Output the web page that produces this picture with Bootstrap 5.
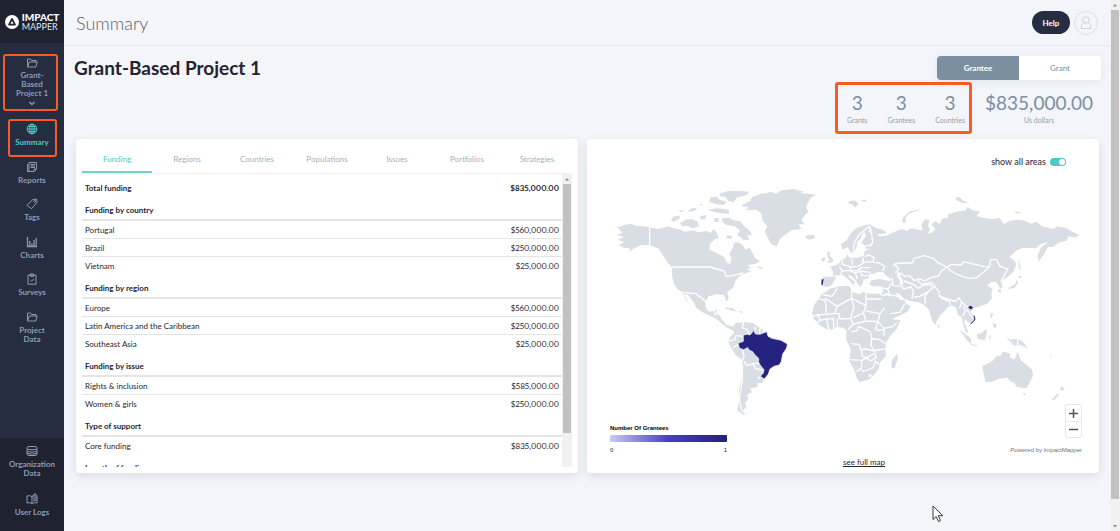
<!DOCTYPE html>
<html lang="en">
<head>
<meta charset="utf-8">
<meta name="viewport" content="width=device-width, initial-scale=1">
<title>Summary - Impact Mapper</title>
<link href="https://cdn.jsdelivr.net/npm/bootstrap@5.3.0/dist/css/bootstrap.min.css" rel="stylesheet">
<style>
:root{--navy:#272d41;--ink:#1e2231;--slate:#7b8fa1;--teal:#4cc9c6;--mark:#f95b25}
body{font-family:Lato,"Open Sans",sans-serif;font-size:8px;line-height:10px;color:#1f2430;background:#f4f5fa}
button{font-family:inherit}
a{color:inherit;text-decoration:none}
.side{width:64px;background:var(--navy);color:#8c9bb0;line-height:9px;font-weight:700;text-align:center}
.brand{height:43px;background:var(--ink);color:#fff;font-size:10px;line-height:9px;gap:3px;text-align:left}
.brand b,.brand span span{display:block}
.brand b{font-weight:900}
.brand span span{font-size:9px;font-weight:400;color:#dfe2e8}
.ico{width:12px;height:12px;fill:none;stroke:currentColor;stroke-width:1;display:block}
.chev{height:6px}
.side-item{display:flex;flex-direction:column;align-items:center;gap:3px;position:relative;width:60px}
.project{margin-top:14px;background:none;border:0;padding:0;color:inherit;font-weight:700;line-height:9px;gap:2px}
.ring{position:absolute;border:2px solid var(--mark);border-radius:3px;pointer-events:none}
.ring-project{inset:-3px 4px -5px 1px}
.ring-summary{inset:-4px 5px -10px 6px}
.side-list{margin-top:17px;height:221px}
.active-item{color:var(--teal)}
.side-foot{background:var(--ink);height:93px;padding-top:7px;gap:15px}
.topbar{height:46px;border-bottom:1px solid #e7e9ef;padding:0 12px}
.topbar h1{font-size:18px;line-height:22px;font-weight:300;color:#5f6168}
.help{background:var(--navy);color:#fff;font-size:8px;font-weight:700;line-height:10px;width:38px;height:23px;border-radius:12px;border:0}
.avatar{width:24px;height:24px;border:1px solid #d9dfe6;border-radius:50%;background:none;color:#c8d2dc;padding:0}
.page{padding:10px 9px 0 10px}
.page h2{font-size:19px;line-height:24px;font-weight:700}
.switcher{width:164px;height:24px;box-shadow:0 2px 8px #27304514;border-radius:4px;overflow:hidden}
.switcher button{border:0;background:#fff;color:var(--slate);font-size:8px;line-height:10px}
.switcher button.on{background:var(--slate);color:#fff;font-weight:700}
.stats{height:55px;color:var(--slate)}
.stat-box{position:relative;padding:0 4px 0 10px;gap:20px}
.ring-stats{inset:-10px -3px -8px -2px;border-width:3px}
.stat b{display:block;font-size:19px;line-height:22px;font-weight:400}
.stat span{font-size:7px;line-height:12px;display:block;color:#8fa0b0}
.panels{display:grid;grid-template-columns:502fr 512fr;gap:9px;margin:0 2px}
.panel{background:#fff;border-radius:4px;box-shadow:0 3px 10px #2730451f}
.fund-panel{padding:4px 6px 6px}
.tabs{display:grid;grid-template-columns:repeat(7,1fr);border-bottom:1px solid #f0f1f4}
.tabs button{background:none;border:0;border-bottom:2px solid transparent;height:30px;padding:3px 0 0;color:#a3b2c1;font-size:8px;line-height:10px}
.tabs button.on{color:var(--teal);border-color:#6fd3d0}
.list{height:293px;overflow:hidden}
.fund{width:100%;border-collapse:separate;border-spacing:0;font-variant-numeric:proportional-nums}
.fund td,.fund th{height:18px;padding:0 3px;border-bottom:1px solid #e3e4e6;font-weight:400}
.fund td:last-child{text-align:right}
.fund tr:last-child td{border-bottom:0}
.fund thead th,.fund thead td{font-weight:700;height:23px;padding-top:4px;border:0}
.fund tbody tr:first-child th{height:24px;padding-top:4px;border-bottom:2px solid #e3e4e6;font-weight:700}
.bar{width:10px;background:#f1f1f1;display:flex;flex-direction:column;align-items:center;flex:none}
.bar i{width:8px;background:#c1c1c1;flex:none}
.bar svg{width:10px;height:10px;flex:none;fill:#8a8a8a}
.map-panel{position:relative;padding:18px 9px 4px 13px}
.form-switch.areas{min-height:0;padding:0;margin:0 24px 12px 0;font-size:9px}
.areas .form-check-input{float:none;margin:0;width:16px;height:8px;border:0;background-color:var(--teal)}
.world{width:100%;display:block}
.land{fill:#d9dee5}
.hit{fill:#252380;stroke:#fff;stroke-width:2}
.edge{fill:none;stroke:#fff;stroke-width:4;stroke-linejoin:round}
.legend{font-family:"Liberation Sans",sans-serif;font-size:6px;line-height:8px;padding:0 8px 0 10px}
.scale{width:117px}
.ramp{height:7px;border-radius:1px;margin:3px 0 4px;background:linear-gradient(90deg,#c8c8fa,#4640bf 50%,#232078)}
.full-map{margin-top:3px;padding-left:38px;text-align:center}
.full-map a{text-decoration:underline}
.zoomer{position:absolute;right:17px;bottom:35px;width:17px;border:1px solid #e8e8ea;border-radius:2px;background:#fff}
.zoomer button{background:none;border:0;height:16px;width:15px;padding:0;color:#555;display:flex;align-items:center;justify-content:center}
.zoomer button+button{border-top:1px solid #e8e8ea}
.pointer{position:absolute;left:932px;top:505px;width:12px;height:18px}
</style>
</head>
<body>
<div class="d-flex min-vh-100">
<aside class="side d-flex flex-column flex-shrink-0">
  <a href="#" class="brand d-flex align-items-center justify-content-center">
    <svg width="14" height="14" viewBox="0 0 14 14"><circle cx="7" cy="7" r="7" fill="#fff"/><path d="M7 4 10 9.600H4Z" fill="none" stroke="#1e2231" stroke-width="1.700" stroke-linejoin="round"/></svg>
    <span><b>IMPACT</b><span>MAPPER</span></span>
  </a>
  <button class="side-item project align-self-center">
    <svg class="ico" viewBox="0 0 12 12"><path d="M1.500 10V2h3l1 1.500H10V5M1.500 10 3.300 5h8L9.800 10Z"/></svg>
    <span>Grant-<br>Based<br>Project 1</span>
    <svg class="ico chev" viewBox="0 0 12 6"><path d="m3.500 2 2.500 2.500L8.500 2" stroke-width="1.500"/></svg>
    <span class="ring ring-project"></span>
  </button>
  <nav class="side-list d-flex flex-column justify-content-between align-items-center">
    <a href="#" class="side-item active-item"><svg class="ico" viewBox="0 0 12 12"><circle cx="6" cy="6" r="4.800"/><ellipse cx="6" cy="6" rx="2.300" ry="4.800"/><path d="M6 1v10M1.200 6h9.600M2 3.500h8M2 8.500h8"/></svg>Summary<span class="ring ring-summary"></span></a>
    <a href="#" class="side-item"><svg class="ico" viewBox="0 0 12 12"><path d="M3 1.500h7.500v7l-2 2H3ZM1.500 3v7.500H8M4.500 3.500H9M4.500 5H9M4.500 6.500H9M8 10V8h2"/></svg>Reports</a>
    <a href="#" class="side-item"><svg class="ico" viewBox="0 0 12 12"><path d="m1 7.500 5.500-5.800L10.500 1l.5 3.500-5.500 6.200Z"/><circle cx="8.800" cy="3.300" r=".8"/></svg>Tags</a>
    <a href="#" class="side-item"><svg class="ico" viewBox="0 0 12 12"><path d="M1.500 1v9.500H11M3.800 10V5M6 10V7.500M8 10V4M10.200 10V2" stroke-width="1.300"/></svg>Charts</a>
    <a href="#" class="side-item"><svg class="ico" viewBox="0 0 12 12"><path d="M2 2.200h8v9H2ZM4.300 1h3.400v2.300H4.300ZM4.200 7l1.400 1.300L8 5.700"/></svg>Surveys</a>
    <a href="#" class="side-item"><svg class="ico" viewBox="0 0 12 12"><path d="M1.500 10V2h3l1 1.500H10V5M1.500 10 3.300 5h8L9.800 10Z"/></svg><span>Project<br>Data</span></a>
  </nav>
  <nav class="side-foot mt-auto d-flex flex-column align-items-center">
    <a href="#" class="side-item"><svg class="ico" viewBox="0 0 12 12"><rect x="1" y="1.500" width="10" height="9" rx="2"/><path d="M1 4.200q5 1.200 10 0M1 6.500q5 1.200 10 0M1 8.500q5 1.200 10 0"/></svg><span>Organization<br>Data</span></a>
    <a href="#" class="side-item"><svg class="ico" viewBox="0 0 12 12"><path d="M1 3q2.500-1 5 .5Q7 2.500 8 2.300M6 3.500V10.500M1 3v7q2.500-1 5 .5 2.500-1.500 5-.5V2.500M8 1.200V8l2-1V1Z"/></svg>User Logs</a>
  </nav>
</aside>

<main class="flex-grow-1">
  <header class="topbar d-flex align-items-center">
    <h1 class="m-0 me-auto">Summary</h1>
    <button class="help me-1">Help</button>
    <button class="avatar d-flex align-items-center justify-content-center" aria-label="Account"><svg width="12" height="14" viewBox="0 0 12 14" fill="none" stroke="currentColor"><circle cx="6" cy="4" r="3.200"/><path d="M3.500 7Q1 8 1 12.500H11Q11 8 8.500 7"/></svg></button>
  </header>
  <div class="page">
    <div class="d-flex justify-content-between">
      <h2 class="m-0">Grant-Based Project 1</h2>
      <div class="switcher d-flex"><button class="on w-50">Grantee</button><button class="w-50">Grant</button></div>
    </div>
    <div class="stats d-flex justify-content-end text-center mt-1 pt-2">
      <div class="stat-box d-flex align-self-start">
        <div class="stat"><b>3</b><span>Grants</span></div>
        <div class="stat"><b>3</b><span>Grantees</span></div>
        <div class="stat"><b>3</b><span>Countries</span></div>
        <span class="ring ring-stats"></span>
      </div>
      <div class="stat ms-3 me-2"><b>$835,000.00</b><span>Us dollars</span></div>
    </div>
    <div class="panels">
      <section class="panel fund-panel">
        <div class="tabs" role="tablist"><button class="on" role="tab">Funding</button><button role="tab">Regions</button><button role="tab">Countries</button><button role="tab">Populations</button><button role="tab">Issues</button><button role="tab">Portfolios</button><button role="tab">Strategies</button></div>
        <div class="list d-flex">
          <div class="flex-grow-1">
          <table class="fund">
            <thead><tr><th>Total funding</th><td>$835,000.00</td></tr></thead>
            <tbody><tr><th colspan="2">Funding by country</th></tr><tr><td>Portugal</td><td>$560,000.00</td></tr><tr><td>Brazil</td><td>$250,000.00</td></tr><tr><td>Vietnam</td><td>$25,000.00</td></tr></tbody>
            <tbody><tr><th colspan="2">Funding by region</th></tr><tr><td>Europe</td><td>$560,000.00</td></tr><tr><td>Latin America and the Caribbean</td><td>$250,000.00</td></tr><tr><td>Southeast Asia</td><td>$25,000.00</td></tr></tbody>
            <tbody><tr><th colspan="2">Funding by issue</th></tr><tr><td>Rights &amp; inclusion</td><td>$585,000.00</td></tr><tr><td>Women &amp; girls</td><td>$250,000.00</td></tr></tbody>
            <tbody><tr><th colspan="2">Type of support</th></tr><tr><td>Core funding</td><td>$835,000.00</td></tr></tbody>
            <tbody><tr><th colspan="2">Length of funding</th></tr></tbody>
          </table>
          </div>
          <div class="bar" aria-hidden="true"><svg viewBox="0 0 10 10"><path d="M3 6.500 5 4l2 2.500Z"/></svg><i style="height:85%"></i></div>
        </div>
      </section>
      <section class="panel map-panel">
        <div class="form-check form-switch areas d-flex justify-content-end align-items-center gap-1"><label for="areas">show all areas</label><input class="form-check-input" type="checkbox" role="switch" id="areas" checked></div>
        <svg class="world" viewBox="0 0 1470 735" role="img" aria-label="World map of grantees">
          <!-- North America, Greenland, Iceland -->
          <g class="land">
            <path d="M50 143 64 142 75 137 92 134 110 140 128 142 150 145 172 150 186 147 205 142 222 148 240 151 252 158 280 154 295 160 320 156 332 162 340 150 350 160 356 178 345 180 330 195 328 212 350 222 372 234 380 250 390 256 395 238 388 224 398 208 402 192 414 190 428 198 436 212 448 206 460 225 466 238 480 245 468 254 442 258 452 266 440 272 455 276 430 286 418 292 406 306 400 325 382 340 386 358 380 368 372 348 350 346 326 352 316 368 318 388 328 398 344 396 352 390 348 404 360 410 368 424 380 438 398 442 406 452 400 455 382 446 366 434 350 420 330 410 308 400 290 388 280 368 264 348 252 344 262 364 270 378 258 362 248 340 234 332 222 314 216 290 217 266 202 250 190 230 178 212 164 206 145 198 122 198 106 206 96 212 86 220 90 208 70 206 56 198 72 190 54 182 72 174 50 168 68 162Z"/>
            <path d="M424 82 432 74 452 66 456 54 482 44 500 42 512 38 528 44 545 34 580 30 612 38 600 42 650 47 632 56 625 70 618 84 625 98 610 114 604 122 614 136 596 136 604 150 574 154 552 170 542 178 530 202 514 196 504 178 494 158 502 142 488 126 484 102 468 92 438 94 446 84Z"/>
            <path d="M615 175 622 169 643 168 645 176 628 182ZM212 124 222 112 240 110 238 120 220 128ZM240 132 258 122 276 120 292 128 298 142 278 148 262 140 246 142ZM366 118 388 116 400 124 420 126 432 140 452 158 455 170 442 166 448 182 432 184 412 168 420 154 404 142 380 138 368 130ZM330 56 350 52 358 62 380 68 372 78 350 76 328 68ZM358 44 385 36 420 36 448 38 440 48 410 56 400 70 384 66 378 54 360 52ZM322 92 350 88 388 92 386 104 352 102ZM300 112 320 108 316 120 302 122ZM262 96 280 86 292 90 276 98ZM232 96 252 92 246 100ZM342 118 354 116 358 128 344 128ZM300 74 310 76 300 80ZM382 168 398 172 392 180 378 178ZM474 262 486 264 488 270 472 266ZM376 384 398 388 412 398 392 394ZM416 396 430 398 424 402Z"/>
          </g>
          <g class="edge"><path d="M149 142V202L176 210M217 264H330L350 270 372 276 378 292 398 290 430 282M248 340 288 344 306 358 316 368M344 396 346 412M362 414 372 424"/></g>
          <!-- South America -->
          <g transform="translate(300 360)">
            <path class="land" d="M100 82 108 70 120 72 130 68 158 72 170 80 184 90 200 98 206 112 250 125 263 135 255 150 246 168 243 192 222 202 208 215 205 225 192 242 186 252 172 252 174 264 150 268 156 280 140 288 145 300 134 314 140 322 128 336 134 344 122 342 112 334 118 300 116 280 124 240 128 200 126 182 106 168 94 146 85 130 90 114 101 104ZM15 44 28 44 38 48 48 50 62 62 74 66 56 60 40 52ZM72 26 90 30 80 32ZM124 344 138 346 128 349Z"/>
            <path class="edge" d="M132 68 126 86 142 92 146 104M88 126 104 122 108 110 130 112M116 136 100 146M128 150 132 176 126 186M132 186 140 200 160 194 178 192M128 200 126 250 118 300 126 338M160 196 166 208 188 214M174 240 182 232M166 84 164 98M180 88 178 104M190 94 190 104"/>
            <path class="hit" d="M114 133 130 127 130 108 142 106 150 108 162 94 166 105 180 106 200 98 204 112 215 118 243 124 262 135 260 147 248 165 244 187 238 198 222 202 210 210 205 225 193 240 181 232 190 222 192 212 182 200 176 190 176 178 165 168 158 158 146 152 144 146 130 152 118 147Z"/>
          </g>
          <!-- Africa -->
          <g transform="translate(300 360)">
            <path class="land" d="M378-22 392-32 420-38 444-40 452-34 456-22 478-14 488-22 510-16 540-16 546 0 560 26 572 48 582 62 602 62 590 90 570 112 558 130 556 150 558 172 540 190 536 210 520 230 505 242 478 249 470 238 464 215 448 185 452 150 438 120 440 95 430 86 412 84 395 92 378 90 358 78 342 60 336 44 342 18 356 0 364-14ZM590 165 594 176 584 208 574 208 576 184Z"/>
            <path class="edge" d="M358 0 375 4 378 20 378 46 350 48M375-2 412 22 436 8 455-2 455-34M370-12 396-8 412-32M412 22 404 44 378 46M455-2 498 20 498 0 498-20M498 0H548M455 0 462 24 452 58 418 60 418 44 404 44M498 20 490 42 460 56M498 36 540 44 556 24M490 42 498 66 534 68 540 44M452 58 460 76 444 92M460 76 498 66M338 50H356L360 64 350 74M360 64 380 60 386 90M380 60 400 58 402 88M412 60V86M534 68 552 88 580 82 590 70M534 68 526 90 534 94 552 92 552 112M454 98 470 96 476 82 510 98 516 118 512 138 524 156 500 150 482 152 478 136 454 134M512 118 540 122 556 134M524 154 554 150M450 182 486 184 500 176 486 172V152M500 176 526 162 528 176 512 186 500 178M486 184 484 208 470 218M484 216 500 214 520 206 526 186M526 186 536 196"/>
            <circle cx="510" cy="230" r="5" fill="#fff"/>
          </g>
          <!-- Europe and Asia -->
          <g transform="translate(660 0)">
            <path class="land" d="M4 320 4 298 12 293 34 293 40 284 36 270 30 264 55 256 64 242 78 236 82 226 88 236 110 236 130 232 134 216 148 210 134 208 138 202 156 202 152 196 134 200 124 190 138 172 134 160 126 164 122 180 112 188 110 205 100 224 90 218 84 204 68 212 62 196 80 184 90 166 108 148 128 140 150 136 166 146 192 154 200 162 184 166 172 164 178 172 200 170 215 162 232 155 245 150 260 155 275 148 295 152 308 154 304 136 316 120 328 124 324 140 330 152 322 164 338 160 346 150 334 136 346 126 360 136 366 120 384 116 384 106 410 98 436 94 444 84 458 94 480 98 470 112 495 118 520 120 538 116 552 136 568 126 590 122 606 122 634 134 650 128 665 142 700 150 712 142 740 148 760 160 778 168 768 176 746 172 738 186 718 190 700 204 684 204 668 232 656 248 652 230 662 208 686 188 660 196 648 208 610 206 590 214 568 234 580 242 590 254 580 278 566 292 552 300 544 310 548 324 540 330 534 316 526 308 512 310 502 320 518 330 514 344 516 358 502 374 480 382 460 388 452 400 464 414 466 424 456 434 444 430 436 420 432 430 442 452 446 466 436 456 428 432 426 414 414 408 408 386 398 380 386 382 374 396 360 410 352 424 345 438 336 424 326 390 312 378 296 370 270 366 250 358 238 344 226 342 240 362 254 364 258 374 272 382 262 398 236 412 212 420 200 400 186 368 182 350 190 336 184 322 156 322 148 314 154 304 180 300 208 306 216 302 196 288 190 280 176 278 162 284 148 284 146 298 130 302 128 314 120 324 110 308 96 292 84 288 88 296 106 308 98 318 90 306 70 288 50 292 42 306 36 318 22 324Z"/>
            <path class="land" d="M6 238 16 234 14 246 4 248ZM22 216 32 222 28 232 40 240 38 250 20 252 28 242 22 232ZM85 68 104 64 116 74 106 86 96 76 86 74ZM120 64 142 62 134 68ZM246 130 250 114 268 98 304 90 290 96 266 104 256 118 258 130ZM405 56 418 54 430 66 444 72 428 72 410 64ZM580 98 606 98 592 104ZM596 238 600 256 602 276 596 266ZM594 290 606 292 600 300ZM590 302 594 312 584 326 562 332 574 322 586 314ZM536 330 544 332 542 342 534 338ZM513 402 520 404 514 418 510 412ZM516 422 520 434 530 436 528 448 520 444ZM352 436 360 442 354 448ZM418 452 430 460 452 478 454 494 440 484 430 468ZM454 494 474 500 470 502 454 498ZM470 466 484 462 500 450 500 466 494 484 474 480ZM510 466 512 482 506 476ZM558 476 572 482 584 480 600 482 612 492 622 508 600 498 580 500 574 490ZM"/>
            <path class="edge" d="M100 224 102 194 118 166 148 142 150 160M150 142 154 160 158 190 152 200M36 292 62 290 66 274 58 262M68 240 66 256 82 260 94 264 112 262 128 254 130 236M96 240 98 258M66 276 90 274 104 282 122 276 150 280M90 264 92 276 112 274 124 266 152 266M130 250 160 248 162 236 148 228 134 232M160 250 178 252 194 262 188 276M120 276 126 290 146 290M106 282 112 300M222 262 224 254 250 252 278 252 282 238 314 230 340 238 352 250 380 264 364 276 354 292 332 296 314 306 300 300 282 304 268 290 254 292 242 282M226 258 236 270 226 282M382 264 394 256 424 258 430 248 464 256 492 262 508 264 490 280 470 296 448 298 420 290 404 282 388 272 382 264M508 262 512 242 530 242 540 262 564 270 556 284 542 308M216 296 220 320 244 322 252 330 274 324 280 338 276 360M252 306 280 316 294 328 312 318 330 316 340 326 324 338 300 352 282 354M290 300 304 316 336 310 358 340 358 352 384 360 406 368 416 356 426 370 418 388M356 346 366 358 388 368 392 378M332 330 314 352 316 374M182 326 204 330 214 312M204 332 210 350 194 342M186 350 204 346 234 352M426 370 440 384 456 382M430 382 436 396 428 412M440 390 450 406 458 418M210 404 240 400 254 374M174 290 194 292"/>
            <path d="M232 280 244 282 240 292 250 306 248 320 238 316 240 304 230 292Z" fill="#fff"/>
            <path d="m5 302 6-2-3 17H4Z" fill="#252380"/>
            <path d="m444 384 8-4 6 4-2 7-6-1Z" fill="#252380"/>
            <path d="M462 410 465 420 461 427 452 434" fill="none" stroke="#252380" stroke-width="3"/>
            <path d="M593 478V504" class="edge"/>
          </g>
          <!-- Oceania -->
          <g class="land" transform="translate(750 300)">
            <path d="M396 262 412 254 430 244 440 230 450 232 460 218 476 222 482 226 478 234 494 242 502 218 508 232 514 246 528 256 546 272 549 290 540 310 530 326 518 328 498 322 494 312 484 308 472 296 444 300 426 308 406 310 404 296ZM518 342 528 344 522 350ZM634 322 644 330 636 336 630 330ZM604 362 622 344 628 346 614 362ZM600 228 606 232 602 234Z"/>
          </g>
        </svg>
        <div class="legend d-flex justify-content-between align-items-end">
          <div class="scale"><strong class="d-block text-black">Number Of Grantees</strong><div class="ramp"></div><div class="d-flex justify-content-between"><span>0</span><span>1</span></div></div>
          <span class="text-secondary">Powered by ImpactMapper</span>
        </div>
        <div class="full-map"><a href="#">see full map</a></div>
        <div class="zoomer"><button aria-label="Zoom in"><svg width="9" height="9" viewBox="0 0 9 9"><path d="M0 4.500H9M4.500 0V9" stroke="currentColor" stroke-width="1.500"/></svg></button><button aria-label="Zoom out"><svg width="9" height="9" viewBox="0 0 9 9"><path d="M0 4.500H9" stroke="currentColor" stroke-width="1.500"/></svg></button></div>
      </section>
    </div>
  </div>
</main>
<div class="bar" aria-hidden="true"><svg viewBox="0 0 10 10"><path d="M3 6.500 5 4l2 2.500Z"/></svg><i style="height:92%"></i><svg class="mt-auto" viewBox="0 0 10 10"><path d="M3 4 5 6.500 7 4Z"/></svg></div>
</div>
<svg class="pointer" viewBox="0 0 12 18"><path d="M1 1V14.500L4.200 11.500 6.500 16.500 8.500 15.600 6.400 10.700H10.800Z" fill="#fff" stroke="#222" stroke-width=".9"/></svg>
<script src="https://cdn.jsdelivr.net/npm/bootstrap@5.3.0/dist/js/bootstrap.bundle.min.js"></script>
</body>
</html>
